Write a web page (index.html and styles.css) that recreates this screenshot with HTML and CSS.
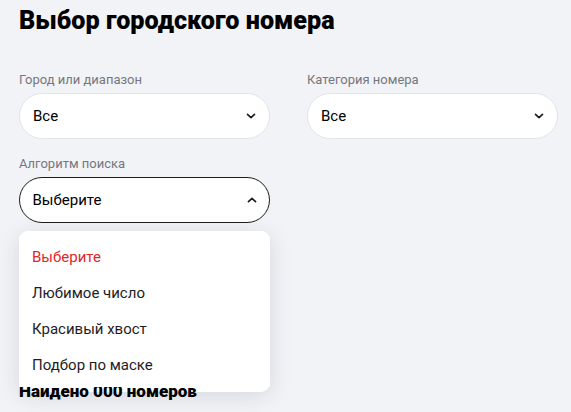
FILE: index.html
```html
<!DOCTYPE html>
<html lang="ru">
<head>
<meta charset="utf-8">
<title>Выбор городского номера</title>
<link rel="stylesheet" href="styles.css">
</head>
<body>
<main class="page">
  <h1 class="title">Выбор городского номера</h1>
  <div class="filters">
    <div class="field">
      <div class="label">Город или диапазон</div>
      <div class="select">
        <span class="value">Все</span>
        <svg class="chev" width="10" height="6" viewBox="0 0 10 6"><path d="M1.5 1.3l3.5 3.4 3.5-3.4" fill="none" stroke="#1d1d1f" stroke-width="1.7" stroke-linecap="round" stroke-linejoin="round"/></svg>
      </div>
    </div>
    <div class="field">
      <div class="label">Категория номера</div>
      <div class="select">
        <span class="value">Все</span>
        <svg class="chev" width="10" height="6" viewBox="0 0 10 6"><path d="M1.5 1.3l3.5 3.4 3.5-3.4" fill="none" stroke="#1d1d1f" stroke-width="1.7" stroke-linecap="round" stroke-linejoin="round"/></svg>
      </div>
    </div>
    <div class="field">
      <div class="label">Алгоритм поиска</div>
      <div class="select select-open">
        <span class="value">Выберите</span>
        <svg class="chev" width="10" height="6" viewBox="0 0 10 6"><path d="M1.5 4.7l3.5-3.4 3.5 3.4" fill="none" stroke="#1d1d1f" stroke-width="1.7" stroke-linecap="round" stroke-linejoin="round"/></svg>
      </div>
      <div class="dropdown">
        <ul class="options">
          <li class="option option-active">Выберите</li>
          <li class="option">Любимое число</li>
          <li class="option">Красивый хвост</li>
          <li class="option">Подбор по маске</li>
        </ul>
      </div>
    </div>
  </div>
  <h2 class="found">Найдено 000 номеров</h2>
</main>
</body>
</html>
```

FILE: styles.css
```css
* { box-sizing: border-box; }
html, body { margin: 0; padding: 0; }
body {
  background: #f2f3f7;
  font-family: Roboto, "Noto Sans", "Liberation Sans", sans-serif;
  color: #1d1d1f;
  width: 571px;
  height: 412px;
  overflow: hidden;
}
.page {
  padding: 5px 13px 0 19px;
}
.title {
  margin: 0;
  font-size: 25.2px;
  line-height: 32px;
  font-weight: 900;
  color: #000;
}
.filters {
  margin-top: 35px;
  display: grid;
  grid-template-columns: 251px 251px;
  column-gap: 37px;
  row-gap: 17px;
}
.field { position: relative; }
.label {
  font-size: 13px;
  line-height: 16px;
  color: #76777d;
  margin-bottom: 5px;
}
.select {
  height: 46px;
  border-radius: 23px;
  background: #fff;
  border: 1px solid #e3e4e9;
  display: flex;
  align-items: center;
  justify-content: space-between;
  padding: 0 13px;
}
.select-open {
  border: 1.5px solid #1d1d1f;
  padding: 0 12.5px;
}
.value {
  font-size: 15px;
  color: #000;
}
.chev { display: block; }
.dropdown {
  position: absolute;
  top: 75px;
  left: 0;
  width: 251px;
  background: #fff;
  border-radius: 9px;
  box-shadow: 0 4px 22px rgba(30, 35, 60, 0.13);
  padding-bottom: 5px;
}
.options {
  position: relative;
  z-index: 2;
  list-style: none;
  margin: 0;
  padding: 8px 0 4px;
  background: #fff;
  border-radius: 9px 9px 0 0;
}
.option {
  height: 36px;
  line-height: 36px;
  padding: 0 13px;
  font-size: 15px;
  color: #1d1d1f;
}
.option-active { color: #e0262b; }
.found {
  position: relative;
  z-index: 1;
  margin: 156px 0 0;
  font-size: 17px;
  line-height: 24px;
  font-weight: 900;
  color: #000;
}
```
